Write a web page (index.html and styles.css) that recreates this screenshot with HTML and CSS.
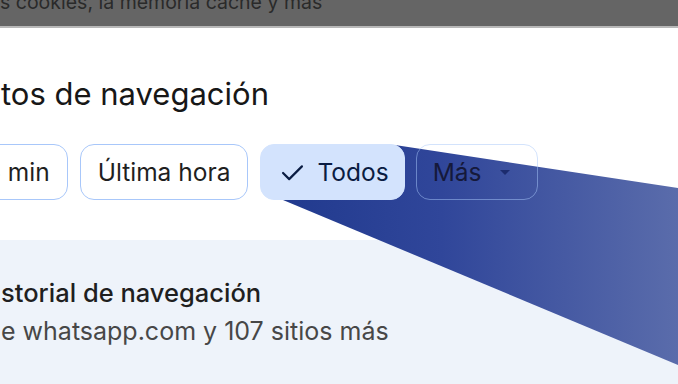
FILE: index.html
```html
<!DOCTYPE html>
<html>
<head>
    <meta charset="UTF-8">
    <title>Eliminar datos de navegación</title>
    <link rel="stylesheet" href="styles.css">
</head>
<body>
    <div class="page">
        <div class="scrim">
            <p class="scrim-text">s cookies, la memoria caché y más</p>
        </div>

        <div class="dialog">
            <h2 class="title">tos de navegación</h2>

            <div class="chips">
                <button class="chip chip-first">5 min</button>
                <button class="chip">Última hora</button>
                <button class="chip chip-selected">
                    <svg class="check" viewBox="0 0 24 18" width="23" height="17">
                        <path d="M2 9.5l6.5 6.5L22 2.5" fill="none" stroke="currentColor" stroke-width="2.3" stroke-linecap="round" stroke-linejoin="round"/>
                    </svg>
                    Todos
                </button>
                <button class="chip chip-more">Más <span class="caret"></span></button>
            </div>

            <div class="panel">
                <p class="panel-title">storial de navegación</p>
                <p class="panel-sub">e whatsapp.com y 107 sitios más</p>
            </div>
        </div>

        <!-- callout pointing at the selected chip -->
        <svg class="callout" viewBox="0 0 678 384" width="678" height="384">
            <defs>
                <linearGradient id="wedge" x1="283" y1="0" x2="678" y2="0" gradientUnits="userSpaceOnUse">
                    <stop offset="0" stop-color="#213a8e"/>
                    <stop offset="0.4" stop-color="#30469a"/>
                    <stop offset="1" stop-color="#5a6cab"/>
                </linearGradient>
            </defs>
            <polygon points="283,200 395,145 678,188 678,365" fill="url(#wedge)"/>
        </svg>
    </div>
</body>
</html>
```

FILE: styles.css
```css
body {
    margin: 0;
    background-color: white;
    font-family: Inter, "Noto Sans", sans-serif;
    color: #1f1f1f;
    overflow: hidden;
}
.page {
    position: relative;
    width: 678px;
    height: 384px;
    overflow: hidden;
}
.scrim {
    height: 26px;
    background-color: #656565;
    border-bottom: 2px solid #b8b8b8;
    overflow: hidden;
}
.scrim-text {
    margin: -10px 0 0 0;
    font-size: 19.5px;
    line-height: 24px;
    color: #2a2a2a;
    white-space: nowrap;
}
.dialog {
    padding-top: 48px;
}
.title {
    margin: 0 0 32px 1px;
    font-size: 31px;
    line-height: 36px;
    font-weight: 400;
    color: #171717;
}
.chips {
    position: relative;
    z-index: 2;
    display: flex;
    gap: 12px;
    margin-left: -32px;
}
.chip {
    display: flex;
    align-items: center;
    gap: 13px;
    height: 56px;
    box-sizing: border-box;
    padding: 0 17px;
    border: 1.5px solid #a8c7fa;
    border-radius: 14px;
    background-color: white;
    font-family: inherit;
    font-size: 24.5px;
    color: #1f1f1f;
}
.chip-selected {
    border-color: #d3e3fd;
    background-color: #d3e3fd;
    color: #0a1c42;
    padding: 0 15px 0 20px;
}
.check {
    color: #0a1c42;
}
.chip-more {
    margin-left: -1px;
    gap: 19px;
    padding: 0 27px 0 16px;
    background-color: transparent;
    border-color: rgba(168, 199, 250, 0.5);
    color: #15193a;
}
.caret {
    width: 0;
    height: 0;
    border-left: 5px solid transparent;
    border-right: 5px solid transparent;
    border-top: 5px solid #1c2c6e;
}
.panel {
    margin-top: 40px;
    padding-top: 38px;
    height: 200px;
    background-color: #eef3fa;
}
.panel p {
    margin: 0 0 8px 1px;
    font-size: 25px;
    line-height: 30px;
    white-space: nowrap;
}
.panel .panel-title {
    font-size: 25.5px;
    font-weight: 500;
    color: #1f1f1f;
}
.panel-sub {
    color: #474747;
}
.callout {
    position: absolute;
    top: 0;
    left: 0;
    z-index: 1;
    pointer-events: none;
}
```
